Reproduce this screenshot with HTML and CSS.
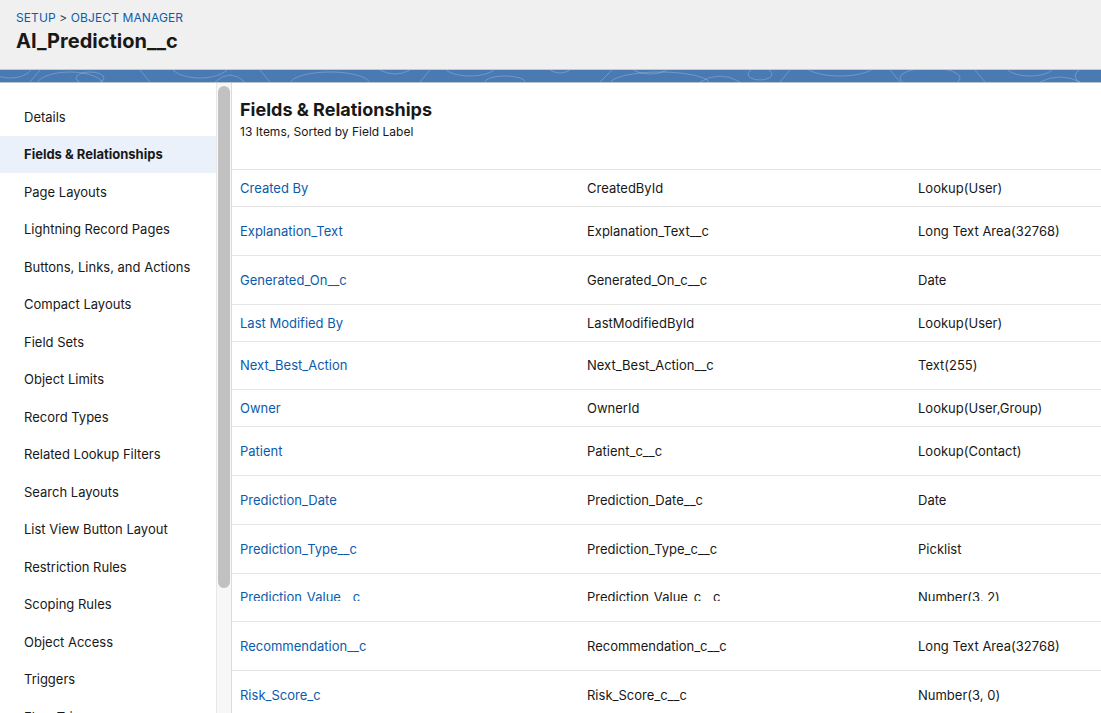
FILE: index.html
```html
<!DOCTYPE html>
<html>
<head>
<meta charset="utf-8">
<link rel="stylesheet" href="styles.css">
</head>
<body>
<header class="page-header">
  <div class="crumbs"><a class="crumb">SETUP</a> <span class="sep">&gt;</span> <a class="crumb">OBJECT MANAGER</a></div>
  <h1 class="obj-title">AI_Prediction__c</h1>
</header>
<div class="band">
  <svg class="swirls" width="1101" height="12" viewBox="0 0 1101 12" preserveAspectRatio="none" xmlns="http://www.w3.org/2000/svg">
    <g fill="none" stroke="#ffffff" stroke-opacity="0.22" stroke-width="1">
      <ellipse cx="10" cy="-4" rx="22" ry="12"/>
      <path d="M30 12 L40 0"/>
      <ellipse cx="70" cy="16" rx="34" ry="14"/>
      <ellipse cx="90" cy="8" rx="14" ry="6"/>
      <path d="M140 0 L150 12"/>
      <ellipse cx="200" cy="-6" rx="30" ry="14"/>
      <path d="M215 12 Q230 -2 245 12"/>
      <path d="M260 0 L270 12"/>
      <ellipse cx="330" cy="14" rx="40" ry="12"/>
      <path d="M380 0 Q395 8 410 0"/>
      <path d="M420 12 L430 0"/>
      <ellipse cx="470" cy="-4" rx="26" ry="10"/>
      <ellipse cx="505" cy="12" rx="20" ry="6"/>
      <path d="M550 0 Q560 6 570 0"/>
      <path d="M600 12 L612 0"/>
      <ellipse cx="650" cy="-5" rx="20" ry="9"/>
      <ellipse cx="660" cy="14" rx="50" ry="12"/>
      <path d="M700 12 Q720 0 740 12"/>
      <ellipse cx="760" cy="4" rx="12" ry="6"/>
      <path d="M780 12 L790 0"/>
      <ellipse cx="840" cy="-6" rx="36" ry="12"/>
      <path d="M890 0 L900 12"/>
      <ellipse cx="930" cy="8" rx="30" ry="10"/>
      <path d="M975 0 Q980 6 985 12"/>
      <ellipse cx="1030" cy="-4" rx="24" ry="10"/>
      <path d="M1040 12 Q1060 2 1080 12"/>
      <ellipse cx="1095" cy="6" rx="20" ry="10"/>
    </g>
  </svg>
</div>
<main class="layout">
  <nav class="sidebar">
    <a class="nav-item">Details</a>
    <a class="nav-item active">Fields &amp; Relationships</a>
    <a class="nav-item">Page Layouts</a>
    <a class="nav-item">Lightning Record Pages</a>
    <a class="nav-item">Buttons, Links, and Actions</a>
    <a class="nav-item">Compact Layouts</a>
    <a class="nav-item">Field Sets</a>
    <a class="nav-item">Object Limits</a>
    <a class="nav-item">Record Types</a>
    <a class="nav-item">Related Lookup Filters</a>
    <a class="nav-item">Search Layouts</a>
    <a class="nav-item">List View Button Layout</a>
    <a class="nav-item">Restriction Rules</a>
    <a class="nav-item">Scoping Rules</a>
    <a class="nav-item">Object Access</a>
    <a class="nav-item">Triggers</a>
    <a class="nav-item">Flow Triggers</a>
  </nav>
  <div class="scroll-track"><div class="scroll-thumb"></div></div>
  <section class="content">
    <div class="content-head">
      <h2 class="section-title">Fields &amp; Relationships</h2>
      <div class="section-sub">13 Items, Sorted by Field Label</div>
    </div>
    <div class="table">
      <div class="row std"><a class="cell label">Created By</a><span class="cell">CreatedById</span><span class="cell">Lookup(User)</span></div>
      <div class="row cust"><a class="cell label">Explanation_Text</a><span class="cell">Explanation_Text__c</span><span class="cell">Long Text Area(32768)</span></div>
      <div class="row cust"><a class="cell label">Generated_On__c</a><span class="cell">Generated_On_c__c</span><span class="cell">Date</span></div>
      <div class="row std"><a class="cell label">Last Modified By</a><span class="cell">LastModifiedById</span><span class="cell">Lookup(User)</span></div>
      <div class="row cust"><a class="cell label">Next_Best_Action</a><span class="cell">Next_Best_Action__c</span><span class="cell">Text(255)</span></div>
      <div class="row std"><a class="cell label">Owner</a><span class="cell">OwnerId</span><span class="cell">Lookup(User,Group)</span></div>
      <div class="row cust"><a class="cell label">Patient</a><span class="cell">Patient_c__c</span><span class="cell">Lookup(Contact)</span></div>
      <div class="row cust"><a class="cell label">Prediction_Date</a><span class="cell">Prediction_Date__c</span><span class="cell">Date</span></div>
      <div class="row cust"><a class="cell label">Prediction_Type__c</a><span class="cell">Prediction_Type_c__c</span><span class="cell">Picklist</span></div>
      <div class="row cust clipped"><a class="cell label"><span class="clip">Prediction_Value__c</span></a><span class="cell"><span class="clip">Prediction_Value_c__c</span></span><span class="cell"><span class="clip">Number(3, 2)</span></span></div>
      <div class="row cust"><a class="cell label">Recommendation__c</a><span class="cell">Recommendation_c__c</span><span class="cell">Long Text Area(32768)</span></div>
      <div class="row cust"><a class="cell label">Risk_Score_c</a><span class="cell">Risk_Score_c__c</span><span class="cell">Number(3, 0)</span></div>
    </div>
  </section>
</main>
</body>
</html>
```

FILE: styles.css
```css
* { box-sizing: border-box; }
html, body { margin: 0; padding: 0; }
body {
  width: 1101px;
  height: 713px;
  overflow: hidden;
  background: #ffffff;
  font-family: "Inter", "Roboto", "Liberation Sans", sans-serif;
  color: #181818;
  font-size: 13px;
}
a { text-decoration: none; cursor: pointer; }

.page-header {
  height: 70px;
  background: #f0f0f0;
  border-bottom: 1px solid #c9c9c9;
  padding: 10px 16px 0;
}
.crumbs {
  font-size: 12px;
  line-height: 15px;
  color: #444;
  letter-spacing: 0.1px;
}
.crumb { color: #0b5cab; }
.sep { color: #444; }
.obj-title {
  margin: 4px 0 0;
  font-size: 20px;
  line-height: 24px;
  font-weight: 700;
  color: #181818;
}

.band {
  height: 13px;
  background: #4a7ab3;
  border-bottom: 1px solid #b9c3cd;
  overflow: hidden;
}
.swirls { display: block; }

.layout {
  display: flex;
  height: 630px;
}
.sidebar {
  width: 216px;
  flex: none;
  padding-top: 15px;
  display: flex;
  flex-direction: column;
  overflow: hidden;
}
.nav-item {
  height: 37.5px;
  flex: none;
  display: flex;
  align-items: center;
  padding-left: 24px;
  color: #181818;
  font-size: 13px;
}
.nav-item.active {
  background: #eaf1fb;
  font-weight: 700;
}
.scroll-track {
  width: 16px;
  flex: none;
  background: #f7f7f7;
  border-left: 1px solid #e8e8e8;
  border-right: 1px solid #dcdcdc;
  padding: 3px 1px 0;
}
.scroll-thumb {
  height: 502px;
  background: #c1c1c1;
  border-radius: 7px;
}

.content {
  flex: 1;
  min-width: 0;
}
.content-head {
  height: 86px;
  padding: 16px 8px 0;
}
.section-title {
  margin: 0;
  font-size: 18px;
  line-height: 22px;
  font-weight: 700;
  color: #181818;
}
.section-sub {
  margin-top: 3px;
  font-size: 12px;
  line-height: 15px;
  color: #181818;
}
.table { border-top: 1px solid #e5e5e5; }
.row {
  display: grid;
  grid-template-columns: 347px 331px 1fr;
  align-items: center;
  border-bottom: 1px solid #e5e5e5;
}
.row.std { height: 37px; }
.row.cust { height: 48.75px; }
.cell {
  padding-left: 8px;
  font-size: 13px;
  line-height: 16px;
  color: #181818;
  white-space: nowrap;
}
.cell.label { color: #0b5cab; }
.clip {
  display: inline-block;
  height: 12px;
  overflow: hidden;
  vertical-align: top;
}
```
